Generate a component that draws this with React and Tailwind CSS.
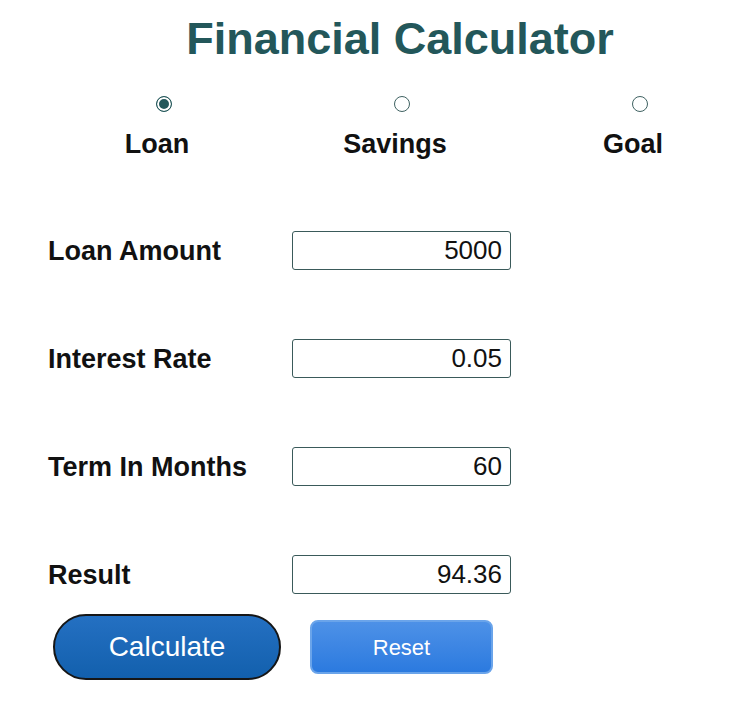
import React, { useState } from 'react'

const modes = ['Loan', 'Savings', 'Goal']

const fields = [
  { label: 'Loan Amount', value: '5000' },
  { label: 'Interest Rate', value: '0.05' },
  { label: 'Term In Months', value: '60' },
  { label: 'Result', value: '94.36' },
]

const App = () => {
  const [mode, setMode] = useState('Loan')
  const [values, setValues] = useState(fields.map(f => f.value))

  return (
    <div className="w-[750px] h-[710px] bg-white font-['Liberation_Sans',Arial,sans-serif] text-[#111]">
      {/* Title */}
      <h1 className="pl-[50px] pt-[11px] text-center text-[45px] leading-[56px] font-bold text-[#23575a]">
        Financial Calculator
      </h1>

      {/* Mode picker */}
      <div className="grid grid-cols-[238px_238px_238px] pl-[38px] mt-[29px]">
        {modes.map(m => (
          <label key={m} className="flex flex-col items-center cursor-pointer">
            <input
              type="radio"
              name="mode"
              checked={mode === m}
              onChange={() => setMode(m)}
              className="appearance-none ml-[13px] w-[16px] h-[16px] rounded-full border-[1.5px] border-[#3f6262] bg-white checked:border-[#23575a] checked:bg-[#23575a] checked:shadow-[inset_0_0_0_2px_white]"
            />
            <span className="mt-[17px] text-[27px] leading-[30px] font-bold">{m}</span>
          </label>
        ))}
      </div>

      {/* Fields */}
      <div className="flex flex-col gap-[69px] mt-[72px] pl-[48px]">
        {fields.map((f, i) => (
          <div key={f.label} className="flex items-center">
            <span className="w-[244px] text-[27px] leading-[30px] font-bold">{f.label}</span>
            <input
              value={values[i]}
              onChange={e =>
                setValues(prev => prev.map((v, j) => (j === i ? e.target.value : v)))
              }
              className="w-[219px] h-[39px] px-[8px] text-right text-[26px] text-[#111] border border-[#3a5a5a] rounded-[3px] outline-none font-['Liberation_Sans',Arial,sans-serif]"
            />
          </div>
        ))}
      </div>

      {/* Buttons */}
      <div className="flex items-center gap-[29px] mt-[20px] pl-[53px]">
        <button className="w-[228px] h-[66px] rounded-full border-2 border-[#161616] bg-gradient-to-b from-[#2470c2] to-[#1260ad] text-white text-[28px]">
          Calculate
        </button>
        <button
          onClick={() => setValues(['', '', '', ''])}
          className="w-[183px] h-[54px] rounded-[8px] border-2 border-[#6aa4ea] bg-gradient-to-b from-[#4d91e7] to-[#2b7adf] text-white text-[22px]"
        >
          Reset
        </button>
      </div>
    </div>
  )
}

export default App
